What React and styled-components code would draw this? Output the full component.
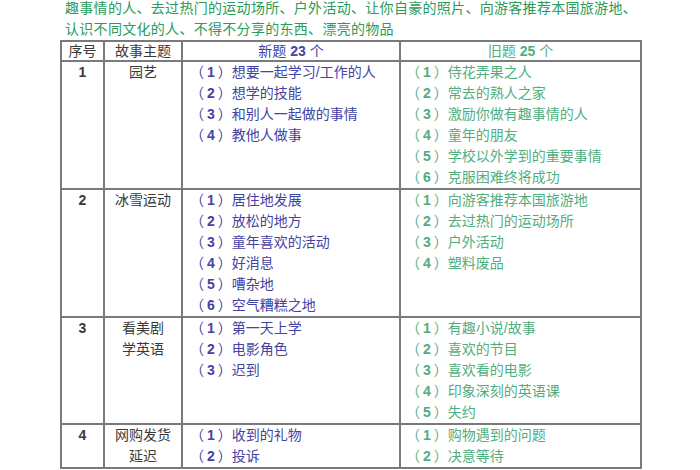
import React from "react";
import styled, { createGlobalStyle } from "styled-components";

const Global = createGlobalStyle`
  html, body { margin: 0; padding: 0; background: #fff; overflow: hidden; }
  body { font-family: "Liberation Sans", "Noto Sans CJK SC", sans-serif; }
`;

const Page = styled.div`
  width: 700px;
  height: 470px;
  overflow: hidden;
  padding-left: 60px;
  box-sizing: border-box;
`;

const Intro = styled.div`
  margin-top: -2px;
  padding-left: 5px;
  color: #2a9b58;
  font-size: 14px;
  line-height: 21px;
  letter-spacing: 0.3px;
  white-space: nowrap;
`;

const Table = styled.table`
  border-collapse: collapse;
  width: 580px;
  table-layout: fixed;
  font-size: 14px;
`;

const HeadCell = styled.th`
  border: 2px solid #7a7a7a;
  font-weight: 400;
  height: 18px;
  line-height: 18px;
  padding: 0;
  text-align: center;
  color: ${(p) => p.$color || "#3a3a3a"};
`;

const Cell = styled.td`
  border: 2px solid #7a7a7a;
  vertical-align: top;
  padding: 0 0 0 ${(p) => (p.$list ? p.$pad : "0")};
  text-align: ${(p) => (p.$list ? "left" : "center")};
  color: ${(p) => p.$color || "#3a3a3a"};
  line-height: 21px;
`;

const Num = styled.span`
  font-weight: 700;
`;

const ItemNum = styled.span`
  font-weight: 700;
  padding: 0 3px;
`;

const Item = styled.div`
  white-space: nowrap;
  line-height: 21px;
`;

const rows = [
  {
    n: "1",
    theme: ["园艺"],
    fresh: ["想要一起学习/工作的人", "想学的技能", "和别人一起做的事情", "教他人做事"],
    old: ["侍花弄果之人", "常去的熟人之家", "激励你做有趣事情的人", "童年的朋友", "学校以外学到的重要事情", "克服困难终将成功"],
  },
  {
    n: "2",
    theme: ["冰雪运动"],
    fresh: ["居住地发展", "放松的地方", "童年喜欢的活动", "好消息", "嘈杂地", "空气糟糕之地"],
    old: ["向游客推荐本国旅游地", "去过热门的运动场所", "户外活动", "塑料废品"],
  },
  {
    n: "3",
    theme: ["看美剧", "学英语"],
    fresh: ["第一天上学", "电影角色", "迟到"],
    old: ["有趣小说/故事", "喜欢的节目", "喜欢看的电影", "印象深刻的英语课", "失约"],
  },
  {
    n: "4",
    theme: ["网购发货", "延迟"],
    fresh: ["收到的礼物", "投诉"],
    old: ["购物遇到的问题", "决意等待"],
  },
];

const NEW = "#4343a3";
const OLD = "#4fae7f";

function List({ items }) {
  return items.map((t, i) => (
    <Item key={i}>
      （<ItemNum>{i + 1}</ItemNum>）{t}
    </Item>
  ));
}

export default function App() {
  return (
    <Page>
      <Global />
      <Intro>
        <div>趣事情的人、去过热门的运动场所、户外活动、让你自豪的照片、向游客推荐本国旅游地、</div>
        <div>认识不同文化的人、不得不分享的东西、漂亮的物品</div>
      </Intro>
      <Table>
        <colgroup>
          <col style={{ width: 43 }} />
          <col style={{ width: 78 }} />
          <col style={{ width: 218 }} />
          <col style={{ width: 241 }} />
        </colgroup>
        <thead>
          <tr>
            <HeadCell>序号</HeadCell>
            <HeadCell>故事主题</HeadCell>
            <HeadCell $color={NEW}>
              新题 <Num>23</Num> 个
            </HeadCell>
            <HeadCell $color={OLD}>
              旧题 <Num>25</Num> 个
            </HeadCell>
          </tr>
        </thead>
        <tbody>
          {rows.map((r) => (
            <tr key={r.n}>
              <Cell>
                <Num>{r.n}</Num>
              </Cell>
              <Cell>
                {r.theme.map((t) => (
                  <Item key={t}>{t}</Item>
                ))}
              </Cell>
              <Cell $list $pad="7px" $color={NEW}>
                <List items={r.fresh} />
              </Cell>
              <Cell $list $pad="5px" $color={OLD}>
                <List items={r.old} />
              </Cell>
            </tr>
          ))}
        </tbody>
      </Table>
    </Page>
  );
}
